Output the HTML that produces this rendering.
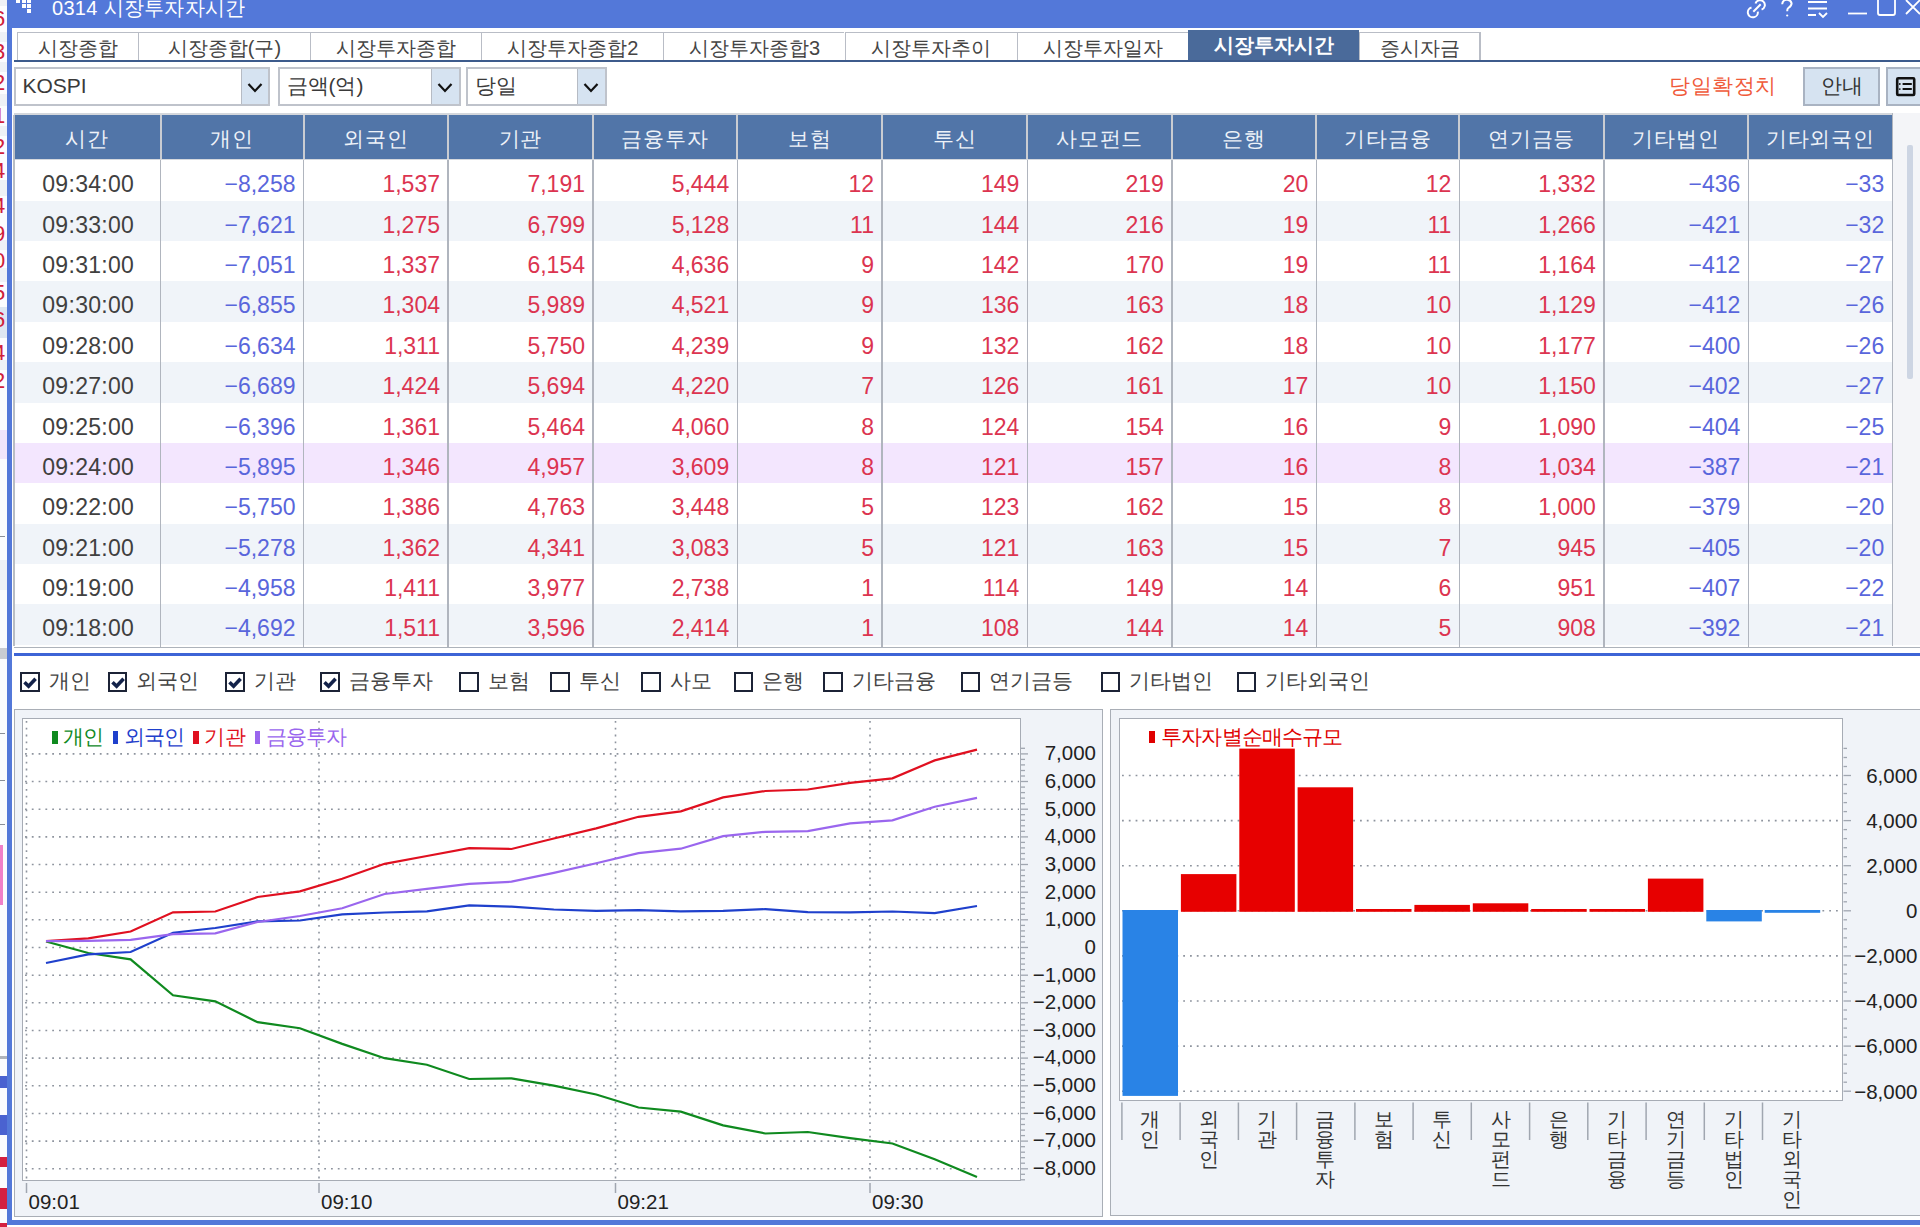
<!DOCTYPE html>
<html><head><meta charset="utf-8"><style>
*{margin:0;padding:0;box-sizing:border-box}
html,body{width:1920px;height:1227px;overflow:hidden;background:#fff}
body{position:relative;font-family:"Liberation Sans",sans-serif;color:#383838}
.a{position:absolute}
.tab{position:absolute;top:32px;height:28px;border-left:1.5px solid #b9bdc6;border-top:1.5px solid #b9bdc6;font-size:20px;line-height:30px;text-align:center;color:#444;white-space:nowrap}
.cb{position:absolute;top:67px;height:39px;border:2px solid #bfc3cb;background:#fff;font-size:21px;line-height:33.5px;color:#3a3a3a;padding-left:6.5px}
.cbb{position:absolute;top:0;right:0;width:27.5px;height:35px;background:#d6e3f1;border-left:1.5px solid #b6bbc4}
.hd{position:absolute;top:115px;height:44px;background:#5175a8;color:#eef2f8;font-size:20.5px;line-height:47px;letter-spacing:0.8px;text-align:center;white-space:nowrap}
.rw{position:absolute;left:14px;width:1878px}
.cell{position:absolute;top:0;font-size:23px;line-height:48px;text-align:right;white-space:nowrap}
.chk{position:absolute;top:672px;width:19.5px;height:19.5px;border:2px solid #1c2336;background:#fff}
.chl{position:absolute;top:667px;font-size:21px;line-height:28px;color:#444;white-space:nowrap}
svg text{font-family:"Liberation Sans",sans-serif}
</style></head><body>

<div class="a" style="left:0;top:0;width:8px;height:1227px;background:#fbfcfe"></div>
<div class="a" style="left:0;top:0px;width:7px;height:6px;background:#eef1f6"></div>
<div class="a" style="left:0;top:32px;width:7px;height:10px;background:#eef1f6"></div>
<div class="a" style="left:0;top:62px;width:7px;height:10px;background:#eef1f6"></div>
<div class="a" style="left:0;top:94px;width:7px;height:12px;background:#eef1f6"></div>
<div class="a" style="left:0;top:126px;width:7px;height:10px;background:#eef1f6"></div>
<div class="a" style="left:0;top:180px;width:7px;height:16px;background:#eef1f6"></div>
<div class="a" style="left:0;top:240px;width:7px;height:10px;background:#eef1f6"></div>
<div class="a" style="left:0;top:268px;width:7px;height:14px;background:#eef1f6"></div>
<div class="a" style="left:0;top:307px;width:7px;height:31px;background:#dde6f2"></div>
<div class="a" style="left:0;top:360px;width:7px;height:10px;background:#eef1f6"></div>
<div class="a" style="left:0;top:430px;width:7px;height:29px;background:#f1e6fb"></div>
<div class="a" style="left:0;top:560px;width:7px;height:30px;background:#eef1f6"></div>
<div class="a" style="left:0;top:648px;width:7px;height:11px;background:#c9ccd2"></div>
<div class="a" style="left:0;top:1056px;width:7px;height:3px;background:#b0b4bb"></div>
<div class="a" style="left:0;top:1076px;width:7px;height:11.5px;background:#4a62d0"></div>
<div class="a" style="left:0;top:1114.7px;width:7px;height:20.6px;background:#4a62d0"></div>
<div class="a" style="left:0;top:1156.6px;width:7px;height:10px;background:#d42040"></div>
<div class="a" style="left:0;top:1188px;width:7px;height:21px;background:#d42040"></div>
<div class="a" style="left:0;top:1223px;width:7px;height:4px;background:#d42040"></div>
<div class="a" style="left:-7px;top:7px;font-size:22px;line-height:24px;color:#d0203a">6</div>
<div class="a" style="left:-7px;top:40px;font-size:22px;line-height:24px;color:#d0203a">3</div>
<div class="a" style="left:-7px;top:71px;font-size:22px;line-height:24px;color:#d0203a">2</div>
<div class="a" style="left:-7px;top:104px;font-size:22px;line-height:24px;color:#d0203a">1</div>
<div class="a" style="left:-7px;top:135px;font-size:22px;line-height:24px;color:#d0203a">2</div>
<div class="a" style="left:-7px;top:159px;font-size:22px;line-height:24px;color:#d0203a">4</div>
<div class="a" style="left:-7px;top:194px;font-size:22px;line-height:24px;color:#d0203a">4</div>
<div class="a" style="left:-7px;top:222px;font-size:22px;line-height:24px;color:#d0203a">9</div>
<div class="a" style="left:-7px;top:249px;font-size:22px;line-height:24px;color:#d0203a">0</div>
<div class="a" style="left:-7px;top:281px;font-size:22px;line-height:24px;color:#d0203a">5</div>
<div class="a" style="left:-7px;top:308px;font-size:22px;line-height:24px;color:#d0203a">6</div>
<div class="a" style="left:-7px;top:341px;font-size:22px;line-height:24px;color:#d0203a">4</div>
<div class="a" style="left:-7px;top:369px;font-size:22px;line-height:24px;color:#d0203a">2</div>
<div class="a" style="left:0;top:845px;width:2.5px;height:60px;background:#f080c8"></div>
<div class="a" style="left:0;top:536px;width:5px;height:1.2px;background:#8a8f98"></div>
<div class="a" style="left:0;top:733px;width:5px;height:1.2px;background:#8a8f98"></div>
<div class="a" style="left:0;top:780px;width:5px;height:1.2px;background:#8a8f98"></div>
<div class="a" style="left:0;top:824px;width:5px;height:1.2px;background:#8a8f98"></div>
<div class="a" style="left:7px;top:0;width:1913px;height:1225px;background:#5378d9"></div>
<div class="a" style="left:11.5px;top:27.5px;width:1908.5px;height:1192.5px;background:#fff"></div>
<div class="a" style="left:52px;top:-5px;font-size:20px;line-height:26px;color:#fff;letter-spacing:0.3px">0314 시장투자자시간</div>
<div class="a" style="left:16.2px;top:-0.8px;width:3.5px;height:3.5px;background:#fff"></div>
<div class="a" style="left:22px;top:-0.8px;width:3.5px;height:3.5px;background:#fff"></div>
<div class="a" style="left:27px;top:-0.8px;width:3.5px;height:3.5px;background:#fff"></div>
<div class="a" style="left:22px;top:4.2px;width:3.5px;height:3.5px;background:#fff"></div>
<div class="a" style="left:27px;top:4.2px;width:3.5px;height:3.5px;background:#fff"></div>
<div class="a" style="left:27px;top:9.3px;width:3.5px;height:3.5px;background:#fff"></div>
<svg class="a" style="left:1740px;top:0" width="180" height="27" viewBox="1740 0 180 27" fill="none" stroke="#fff" stroke-width="1.8">
<path d="M1751.5 7.5 A5 5 0 1 0 1757.8 11.6 M1755.5 3.5 A4.8 4.8 0 1 1 1761.6 9.6 M1753.3 11.7 L1760.7 4.3" stroke-width="2"/>
<path d="M1782.2 4.3 A4.8 4.8 0 0 1 1791.6 3.2 Q1791.6 6 1788.3 8 Q1787.2 8.8 1787.2 11.2" stroke-width="2"/><circle cx="1787.2" cy="15.5" r="1.1" fill="#fff" stroke="none"/>
<path d="M1808 2 h19 M1808 8.5 h19 M1808 15 h8 M1819 13 l4 4 l4 -4"/>
<path d="M1848 13.5 h19"/>
<rect x="1878" y="-2" width="17" height="17" rx="2"/>
<path d="M1906 0 l14 14 M1906 14 l14 -14"/>
</svg>
<div class="tab" style="left:17px;width:121px">시장종합</div>
<div class="tab" style="left:138px;width:172px">시장종합(구)</div>
<div class="tab" style="left:310px;width:171px">시장투자종합</div>
<div class="tab" style="left:481.4px;width:182.0px">시장투자종합2</div>
<div class="tab" style="left:663.4px;width:181.10000000000002px">시장투자종합3</div>
<div class="tab" style="left:844.5px;width:172.39999999999998px">시장투자추이</div>
<div class="tab" style="left:1016.9px;width:171.10000000000002px">시장투자일자</div>
<div class="tab" style="left:1188px;width:171px;top:30px;height:30px;background:#4a6a9a;color:#fff;font-weight:bold;border:none;line-height:31px">시장투자시간</div>
<div class="tab" style="left:1359px;width:120px">증시자금</div>
<div class="a" style="left:1479px;top:32px;width:1.5px;height:28px;background:#b9bdc6"></div>
<div class="a" style="left:14px;top:59.5px;width:1906px;height:2px;background:#3d5b8c"></div>
<div class="cb" style="left:14px;width:256px">KOSPI<div class="cbb"><svg class="a" style="left:5px;top:13px" width="16" height="12"><path d="M1.5 2 L8 9 L14.5 2" fill="none" stroke="#111" stroke-width="2.2"/></svg></div></div>
<div class="cb" style="left:278px;width:182.5px">금액(억)<div class="cbb"><svg class="a" style="left:5px;top:13px" width="16" height="12"><path d="M1.5 2 L8 9 L14.5 2" fill="none" stroke="#111" stroke-width="2.2"/></svg></div></div>
<div class="cb" style="left:466px;width:140.5px">당일<div class="cbb"><svg class="a" style="left:5px;top:13px" width="16" height="12"><path d="M1.5 2 L8 9 L14.5 2" fill="none" stroke="#111" stroke-width="2.2"/></svg></div></div>
<div class="a" style="left:1669px;top:70px;font-size:20.5px;line-height:32px;color:#f05a3a;letter-spacing:0.5px">당일확정치</div>
<div class="a" style="left:1803px;top:67px;width:77px;height:39px;background:#d6e3f1;border:2px solid #a9b3c2;font-size:20.5px;line-height:33px;text-align:center;color:#333">안내</div>
<div class="a" style="left:1886px;top:67px;width:40px;height:39px;background:#d6e3f1;border:2px solid #a9b3c2"></div>
<svg class="a" style="left:1890px;top:70px" width="30" height="32" viewBox="1890 70 30 32"><rect x="1897.2" y="78.2" width="17" height="16.8" rx="1" fill="none" stroke="#111" stroke-width="2.6"/><path d="M1902.6 84 h9.2 M1902.6 89.1 h9.2" stroke="#111" stroke-width="2"/><circle cx="1899.8" cy="84" r="0.9" fill="#111"/><circle cx="1899.8" cy="89.1" r="0.9" fill="#111"/></svg>
<div class="a" style="left:14px;top:113px;width:1878px;height:2px;background:#d4d7dc"></div>
<div class="hd" style="left:14.0px;width:146.5px">시간</div>
<div class="hd" style="left:160.5px;width:143.0px">개인</div>
<div class="hd" style="left:303.5px;width:144.5px">외국인</div>
<div class="hd" style="left:448.0px;width:145.0px">기관</div>
<div class="hd" style="left:593.0px;width:144.2px">금융투자</div>
<div class="hd" style="left:737.2px;width:144.8px">보험</div>
<div class="hd" style="left:882.0px;width:145.3px">투신</div>
<div class="hd" style="left:1027.3px;width:144.5px">사모펀드</div>
<div class="hd" style="left:1171.8px;width:144.5px">은행</div>
<div class="hd" style="left:1316.3px;width:143.1px">기타금융</div>
<div class="hd" style="left:1459.4px;width:144.4px">연기금등</div>
<div class="hd" style="left:1603.8px;width:144.6px">기타법인</div>
<div class="hd" style="left:1748.4px;width:143.8px">기타외국인</div>
<div class="a" style="left:159.5px;top:115px;width:2px;height:44px;background:#c9ccd2"></div>
<div class="a" style="left:302.5px;top:115px;width:2px;height:44px;background:#c9ccd2"></div>
<div class="a" style="left:447.0px;top:115px;width:2px;height:44px;background:#c9ccd2"></div>
<div class="a" style="left:592.0px;top:115px;width:2px;height:44px;background:#c9ccd2"></div>
<div class="a" style="left:736.2px;top:115px;width:2px;height:44px;background:#c9ccd2"></div>
<div class="a" style="left:881.0px;top:115px;width:2px;height:44px;background:#c9ccd2"></div>
<div class="a" style="left:1026.3px;top:115px;width:2px;height:44px;background:#c9ccd2"></div>
<div class="a" style="left:1170.8px;top:115px;width:2px;height:44px;background:#c9ccd2"></div>
<div class="a" style="left:1315.3px;top:115px;width:2px;height:44px;background:#c9ccd2"></div>
<div class="a" style="left:1458.4px;top:115px;width:2px;height:44px;background:#c9ccd2"></div>
<div class="a" style="left:1602.8px;top:115px;width:2px;height:44px;background:#c9ccd2"></div>
<div class="a" style="left:1747.4px;top:115px;width:2px;height:44px;background:#c9ccd2"></div>
<div class="a" style="left:14px;top:159px;width:1878px;height:1.5px;background:#d5d8dd"></div>
<div class="rw" style="top:160.30px;height:40.38px;background:#fff">
<div class="cell" style="left:0.0px;width:146.5px;text-align:center;color:#404040;letter-spacing:0.3px;padding-left:2px">09:34:00</div>
<div class="cell" style="left:146.5px;width:135.0px;color:#5966dc">&#8722;8,258</div>
<div class="cell" style="left:289.5px;width:136.5px;color:#dc3450">1,537</div>
<div class="cell" style="left:434.0px;width:137.0px;color:#dc3450">7,191</div>
<div class="cell" style="left:579.0px;width:136.2px;color:#dc3450">5,444</div>
<div class="cell" style="left:723.2px;width:136.8px;color:#dc3450">12</div>
<div class="cell" style="left:868.0px;width:137.3px;color:#dc3450">149</div>
<div class="cell" style="left:1013.3px;width:136.5px;color:#dc3450">219</div>
<div class="cell" style="left:1157.8px;width:136.5px;color:#dc3450">20</div>
<div class="cell" style="left:1302.3px;width:135.1px;color:#dc3450">12</div>
<div class="cell" style="left:1445.4px;width:136.4px;color:#dc3450">1,332</div>
<div class="cell" style="left:1589.8px;width:136.6px;color:#5966dc">&#8722;436</div>
<div class="cell" style="left:1734.4px;width:135.8px;color:#5966dc">&#8722;33</div>
</div>
<div class="rw" style="top:200.68px;height:40.38px;background:#f0f4f9">
<div class="cell" style="left:0.0px;width:146.5px;text-align:center;color:#404040;letter-spacing:0.3px;padding-left:2px">09:33:00</div>
<div class="cell" style="left:146.5px;width:135.0px;color:#5966dc">&#8722;7,621</div>
<div class="cell" style="left:289.5px;width:136.5px;color:#dc3450">1,275</div>
<div class="cell" style="left:434.0px;width:137.0px;color:#dc3450">6,799</div>
<div class="cell" style="left:579.0px;width:136.2px;color:#dc3450">5,128</div>
<div class="cell" style="left:723.2px;width:136.8px;color:#dc3450">11</div>
<div class="cell" style="left:868.0px;width:137.3px;color:#dc3450">144</div>
<div class="cell" style="left:1013.3px;width:136.5px;color:#dc3450">216</div>
<div class="cell" style="left:1157.8px;width:136.5px;color:#dc3450">19</div>
<div class="cell" style="left:1302.3px;width:135.1px;color:#dc3450">11</div>
<div class="cell" style="left:1445.4px;width:136.4px;color:#dc3450">1,266</div>
<div class="cell" style="left:1589.8px;width:136.6px;color:#5966dc">&#8722;421</div>
<div class="cell" style="left:1734.4px;width:135.8px;color:#5966dc">&#8722;32</div>
</div>
<div class="rw" style="top:241.06px;height:40.38px;background:#fff">
<div class="cell" style="left:0.0px;width:146.5px;text-align:center;color:#404040;letter-spacing:0.3px;padding-left:2px">09:31:00</div>
<div class="cell" style="left:146.5px;width:135.0px;color:#5966dc">&#8722;7,051</div>
<div class="cell" style="left:289.5px;width:136.5px;color:#dc3450">1,337</div>
<div class="cell" style="left:434.0px;width:137.0px;color:#dc3450">6,154</div>
<div class="cell" style="left:579.0px;width:136.2px;color:#dc3450">4,636</div>
<div class="cell" style="left:723.2px;width:136.8px;color:#dc3450">9</div>
<div class="cell" style="left:868.0px;width:137.3px;color:#dc3450">142</div>
<div class="cell" style="left:1013.3px;width:136.5px;color:#dc3450">170</div>
<div class="cell" style="left:1157.8px;width:136.5px;color:#dc3450">19</div>
<div class="cell" style="left:1302.3px;width:135.1px;color:#dc3450">11</div>
<div class="cell" style="left:1445.4px;width:136.4px;color:#dc3450">1,164</div>
<div class="cell" style="left:1589.8px;width:136.6px;color:#5966dc">&#8722;412</div>
<div class="cell" style="left:1734.4px;width:135.8px;color:#5966dc">&#8722;27</div>
</div>
<div class="rw" style="top:281.44px;height:40.38px;background:#f0f4f9">
<div class="cell" style="left:0.0px;width:146.5px;text-align:center;color:#404040;letter-spacing:0.3px;padding-left:2px">09:30:00</div>
<div class="cell" style="left:146.5px;width:135.0px;color:#5966dc">&#8722;6,855</div>
<div class="cell" style="left:289.5px;width:136.5px;color:#dc3450">1,304</div>
<div class="cell" style="left:434.0px;width:137.0px;color:#dc3450">5,989</div>
<div class="cell" style="left:579.0px;width:136.2px;color:#dc3450">4,521</div>
<div class="cell" style="left:723.2px;width:136.8px;color:#dc3450">9</div>
<div class="cell" style="left:868.0px;width:137.3px;color:#dc3450">136</div>
<div class="cell" style="left:1013.3px;width:136.5px;color:#dc3450">163</div>
<div class="cell" style="left:1157.8px;width:136.5px;color:#dc3450">18</div>
<div class="cell" style="left:1302.3px;width:135.1px;color:#dc3450">10</div>
<div class="cell" style="left:1445.4px;width:136.4px;color:#dc3450">1,129</div>
<div class="cell" style="left:1589.8px;width:136.6px;color:#5966dc">&#8722;412</div>
<div class="cell" style="left:1734.4px;width:135.8px;color:#5966dc">&#8722;26</div>
</div>
<div class="rw" style="top:321.82px;height:40.38px;background:#fff">
<div class="cell" style="left:0.0px;width:146.5px;text-align:center;color:#404040;letter-spacing:0.3px;padding-left:2px">09:28:00</div>
<div class="cell" style="left:146.5px;width:135.0px;color:#5966dc">&#8722;6,634</div>
<div class="cell" style="left:289.5px;width:136.5px;color:#dc3450">1,311</div>
<div class="cell" style="left:434.0px;width:137.0px;color:#dc3450">5,750</div>
<div class="cell" style="left:579.0px;width:136.2px;color:#dc3450">4,239</div>
<div class="cell" style="left:723.2px;width:136.8px;color:#dc3450">9</div>
<div class="cell" style="left:868.0px;width:137.3px;color:#dc3450">132</div>
<div class="cell" style="left:1013.3px;width:136.5px;color:#dc3450">162</div>
<div class="cell" style="left:1157.8px;width:136.5px;color:#dc3450">18</div>
<div class="cell" style="left:1302.3px;width:135.1px;color:#dc3450">10</div>
<div class="cell" style="left:1445.4px;width:136.4px;color:#dc3450">1,177</div>
<div class="cell" style="left:1589.8px;width:136.6px;color:#5966dc">&#8722;400</div>
<div class="cell" style="left:1734.4px;width:135.8px;color:#5966dc">&#8722;26</div>
</div>
<div class="rw" style="top:362.20px;height:40.38px;background:#f0f4f9">
<div class="cell" style="left:0.0px;width:146.5px;text-align:center;color:#404040;letter-spacing:0.3px;padding-left:2px">09:27:00</div>
<div class="cell" style="left:146.5px;width:135.0px;color:#5966dc">&#8722;6,689</div>
<div class="cell" style="left:289.5px;width:136.5px;color:#dc3450">1,424</div>
<div class="cell" style="left:434.0px;width:137.0px;color:#dc3450">5,694</div>
<div class="cell" style="left:579.0px;width:136.2px;color:#dc3450">4,220</div>
<div class="cell" style="left:723.2px;width:136.8px;color:#dc3450">7</div>
<div class="cell" style="left:868.0px;width:137.3px;color:#dc3450">126</div>
<div class="cell" style="left:1013.3px;width:136.5px;color:#dc3450">161</div>
<div class="cell" style="left:1157.8px;width:136.5px;color:#dc3450">17</div>
<div class="cell" style="left:1302.3px;width:135.1px;color:#dc3450">10</div>
<div class="cell" style="left:1445.4px;width:136.4px;color:#dc3450">1,150</div>
<div class="cell" style="left:1589.8px;width:136.6px;color:#5966dc">&#8722;402</div>
<div class="cell" style="left:1734.4px;width:135.8px;color:#5966dc">&#8722;27</div>
</div>
<div class="rw" style="top:402.58px;height:40.38px;background:#fff">
<div class="cell" style="left:0.0px;width:146.5px;text-align:center;color:#404040;letter-spacing:0.3px;padding-left:2px">09:25:00</div>
<div class="cell" style="left:146.5px;width:135.0px;color:#5966dc">&#8722;6,396</div>
<div class="cell" style="left:289.5px;width:136.5px;color:#dc3450">1,361</div>
<div class="cell" style="left:434.0px;width:137.0px;color:#dc3450">5,464</div>
<div class="cell" style="left:579.0px;width:136.2px;color:#dc3450">4,060</div>
<div class="cell" style="left:723.2px;width:136.8px;color:#dc3450">8</div>
<div class="cell" style="left:868.0px;width:137.3px;color:#dc3450">124</div>
<div class="cell" style="left:1013.3px;width:136.5px;color:#dc3450">154</div>
<div class="cell" style="left:1157.8px;width:136.5px;color:#dc3450">16</div>
<div class="cell" style="left:1302.3px;width:135.1px;color:#dc3450">9</div>
<div class="cell" style="left:1445.4px;width:136.4px;color:#dc3450">1,090</div>
<div class="cell" style="left:1589.8px;width:136.6px;color:#5966dc">&#8722;404</div>
<div class="cell" style="left:1734.4px;width:135.8px;color:#5966dc">&#8722;25</div>
</div>
<div class="rw" style="top:442.96px;height:40.38px;background:#f3e6fe">
<div class="cell" style="left:0.0px;width:146.5px;text-align:center;color:#404040;letter-spacing:0.3px;padding-left:2px">09:24:00</div>
<div class="cell" style="left:146.5px;width:135.0px;color:#5966dc">&#8722;5,895</div>
<div class="cell" style="left:289.5px;width:136.5px;color:#dc3450">1,346</div>
<div class="cell" style="left:434.0px;width:137.0px;color:#dc3450">4,957</div>
<div class="cell" style="left:579.0px;width:136.2px;color:#dc3450">3,609</div>
<div class="cell" style="left:723.2px;width:136.8px;color:#dc3450">8</div>
<div class="cell" style="left:868.0px;width:137.3px;color:#dc3450">121</div>
<div class="cell" style="left:1013.3px;width:136.5px;color:#dc3450">157</div>
<div class="cell" style="left:1157.8px;width:136.5px;color:#dc3450">16</div>
<div class="cell" style="left:1302.3px;width:135.1px;color:#dc3450">8</div>
<div class="cell" style="left:1445.4px;width:136.4px;color:#dc3450">1,034</div>
<div class="cell" style="left:1589.8px;width:136.6px;color:#5966dc">&#8722;387</div>
<div class="cell" style="left:1734.4px;width:135.8px;color:#5966dc">&#8722;21</div>
</div>
<div class="rw" style="top:483.34px;height:40.38px;background:#fff">
<div class="cell" style="left:0.0px;width:146.5px;text-align:center;color:#404040;letter-spacing:0.3px;padding-left:2px">09:22:00</div>
<div class="cell" style="left:146.5px;width:135.0px;color:#5966dc">&#8722;5,750</div>
<div class="cell" style="left:289.5px;width:136.5px;color:#dc3450">1,386</div>
<div class="cell" style="left:434.0px;width:137.0px;color:#dc3450">4,763</div>
<div class="cell" style="left:579.0px;width:136.2px;color:#dc3450">3,448</div>
<div class="cell" style="left:723.2px;width:136.8px;color:#dc3450">5</div>
<div class="cell" style="left:868.0px;width:137.3px;color:#dc3450">123</div>
<div class="cell" style="left:1013.3px;width:136.5px;color:#dc3450">162</div>
<div class="cell" style="left:1157.8px;width:136.5px;color:#dc3450">15</div>
<div class="cell" style="left:1302.3px;width:135.1px;color:#dc3450">8</div>
<div class="cell" style="left:1445.4px;width:136.4px;color:#dc3450">1,000</div>
<div class="cell" style="left:1589.8px;width:136.6px;color:#5966dc">&#8722;379</div>
<div class="cell" style="left:1734.4px;width:135.8px;color:#5966dc">&#8722;20</div>
</div>
<div class="rw" style="top:523.72px;height:40.38px;background:#f0f4f9">
<div class="cell" style="left:0.0px;width:146.5px;text-align:center;color:#404040;letter-spacing:0.3px;padding-left:2px">09:21:00</div>
<div class="cell" style="left:146.5px;width:135.0px;color:#5966dc">&#8722;5,278</div>
<div class="cell" style="left:289.5px;width:136.5px;color:#dc3450">1,362</div>
<div class="cell" style="left:434.0px;width:137.0px;color:#dc3450">4,341</div>
<div class="cell" style="left:579.0px;width:136.2px;color:#dc3450">3,083</div>
<div class="cell" style="left:723.2px;width:136.8px;color:#dc3450">5</div>
<div class="cell" style="left:868.0px;width:137.3px;color:#dc3450">121</div>
<div class="cell" style="left:1013.3px;width:136.5px;color:#dc3450">163</div>
<div class="cell" style="left:1157.8px;width:136.5px;color:#dc3450">15</div>
<div class="cell" style="left:1302.3px;width:135.1px;color:#dc3450">7</div>
<div class="cell" style="left:1445.4px;width:136.4px;color:#dc3450">945</div>
<div class="cell" style="left:1589.8px;width:136.6px;color:#5966dc">&#8722;405</div>
<div class="cell" style="left:1734.4px;width:135.8px;color:#5966dc">&#8722;20</div>
</div>
<div class="rw" style="top:564.10px;height:40.38px;background:#fff">
<div class="cell" style="left:0.0px;width:146.5px;text-align:center;color:#404040;letter-spacing:0.3px;padding-left:2px">09:19:00</div>
<div class="cell" style="left:146.5px;width:135.0px;color:#5966dc">&#8722;4,958</div>
<div class="cell" style="left:289.5px;width:136.5px;color:#dc3450">1,411</div>
<div class="cell" style="left:434.0px;width:137.0px;color:#dc3450">3,977</div>
<div class="cell" style="left:579.0px;width:136.2px;color:#dc3450">2,738</div>
<div class="cell" style="left:723.2px;width:136.8px;color:#dc3450">1</div>
<div class="cell" style="left:868.0px;width:137.3px;color:#dc3450">114</div>
<div class="cell" style="left:1013.3px;width:136.5px;color:#dc3450">149</div>
<div class="cell" style="left:1157.8px;width:136.5px;color:#dc3450">14</div>
<div class="cell" style="left:1302.3px;width:135.1px;color:#dc3450">6</div>
<div class="cell" style="left:1445.4px;width:136.4px;color:#dc3450">951</div>
<div class="cell" style="left:1589.8px;width:136.6px;color:#5966dc">&#8722;407</div>
<div class="cell" style="left:1734.4px;width:135.8px;color:#5966dc">&#8722;22</div>
</div>
<div class="rw" style="top:604.48px;height:40.38px;background:#f0f4f9">
<div class="cell" style="left:0.0px;width:146.5px;text-align:center;color:#404040;letter-spacing:0.3px;padding-left:2px">09:18:00</div>
<div class="cell" style="left:146.5px;width:135.0px;color:#5966dc">&#8722;4,692</div>
<div class="cell" style="left:289.5px;width:136.5px;color:#dc3450">1,511</div>
<div class="cell" style="left:434.0px;width:137.0px;color:#dc3450">3,596</div>
<div class="cell" style="left:579.0px;width:136.2px;color:#dc3450">2,414</div>
<div class="cell" style="left:723.2px;width:136.8px;color:#dc3450">1</div>
<div class="cell" style="left:868.0px;width:137.3px;color:#dc3450">108</div>
<div class="cell" style="left:1013.3px;width:136.5px;color:#dc3450">144</div>
<div class="cell" style="left:1157.8px;width:136.5px;color:#dc3450">14</div>
<div class="cell" style="left:1302.3px;width:135.1px;color:#dc3450">5</div>
<div class="cell" style="left:1445.4px;width:136.4px;color:#dc3450">908</div>
<div class="cell" style="left:1589.8px;width:136.6px;color:#5966dc">&#8722;392</div>
<div class="cell" style="left:1734.4px;width:135.8px;color:#5966dc">&#8722;21</div>
</div>
<div class="a" style="left:159.8px;top:160px;width:1.5px;height:488px;background:#b0b5be"></div>
<div class="a" style="left:302.8px;top:160px;width:1.5px;height:488px;background:#b0b5be"></div>
<div class="a" style="left:447.2px;top:160px;width:1.5px;height:488px;background:#b0b5be"></div>
<div class="a" style="left:592.2px;top:160px;width:1.5px;height:488px;background:#b0b5be"></div>
<div class="a" style="left:736.5px;top:160px;width:1.5px;height:488px;background:#b0b5be"></div>
<div class="a" style="left:881.2px;top:160px;width:1.5px;height:488px;background:#b0b5be"></div>
<div class="a" style="left:1026.5px;top:160px;width:1.5px;height:488px;background:#b0b5be"></div>
<div class="a" style="left:1171.0px;top:160px;width:1.5px;height:488px;background:#b0b5be"></div>
<div class="a" style="left:1315.5px;top:160px;width:1.5px;height:488px;background:#b0b5be"></div>
<div class="a" style="left:1458.7px;top:160px;width:1.5px;height:488px;background:#b0b5be"></div>
<div class="a" style="left:1603.0px;top:160px;width:1.5px;height:488px;background:#b0b5be"></div>
<div class="a" style="left:1747.7px;top:160px;width:1.5px;height:488px;background:#b0b5be"></div>
<div class="a" style="left:13px;top:115px;width:2px;height:531px;background:#b8bdc4"></div>
<div class="a" style="left:1891.5px;top:113px;width:1.5px;height:533px;background:#b0b5be"></div>
<div class="a" style="left:14px;top:646.8px;width:1906px;height:1.6px;background:#adb3bb"></div>
<div class="a" style="left:1893px;top:113px;width:27px;height:532px;background:#f4f5f8"></div>
<div class="a" style="left:1907px;top:145px;width:6px;height:234px;background:#cdd5e3;border-radius:2px"></div>
<div class="a" style="left:14px;top:653.3px;width:1906px;height:3.2px;background:#3d64d6"></div>
<div class="chk" style="left:20.25px"></div>
<svg class="a" style="left:23.25px;top:675px" width="14" height="14"><path d="M1.5 7.2 L5.6 11.2 L12.6 3.8" fill="none" stroke="#13224a" stroke-width="3.6"/></svg>
<div class="chl" style="left:48.75px">개인</div>
<div class="chk" style="left:107.75px"></div>
<svg class="a" style="left:110.75px;top:675px" width="14" height="14"><path d="M1.5 7.2 L5.6 11.2 L12.6 3.8" fill="none" stroke="#13224a" stroke-width="3.6"/></svg>
<div class="chl" style="left:136.25px">외국인</div>
<div class="chk" style="left:225px"></div>
<svg class="a" style="left:228px;top:675px" width="14" height="14"><path d="M1.5 7.2 L5.6 11.2 L12.6 3.8" fill="none" stroke="#13224a" stroke-width="3.6"/></svg>
<div class="chl" style="left:253.5px">기관</div>
<div class="chk" style="left:320px"></div>
<svg class="a" style="left:323px;top:675px" width="14" height="14"><path d="M1.5 7.2 L5.6 11.2 L12.6 3.8" fill="none" stroke="#13224a" stroke-width="3.6"/></svg>
<div class="chl" style="left:348.5px">금융투자</div>
<div class="chk" style="left:459.25px"></div>
<div class="chl" style="left:487.75px">보험</div>
<div class="chk" style="left:550px"></div>
<div class="chl" style="left:578.5px">투신</div>
<div class="chk" style="left:641px"></div>
<div class="chl" style="left:669.5px">사모</div>
<div class="chk" style="left:733.5px"></div>
<div class="chl" style="left:762.0px">은행</div>
<div class="chk" style="left:823px"></div>
<div class="chl" style="left:851.5px">기타금융</div>
<div class="chk" style="left:960.5px"></div>
<div class="chl" style="left:989.0px">연기금등</div>
<div class="chk" style="left:1100.75px"></div>
<div class="chl" style="left:1129.25px">기타법인</div>
<div class="chk" style="left:1236.75px"></div>
<div class="chl" style="left:1265.25px">기타외국인</div>
<div class="a" style="left:13.5px;top:709px;width:1089.5px;height:507.5px;background:#f0f3f8;border:1.5px solid #a9aeb6"></div>
<div class="a" style="left:22px;top:718px;width:999px;height:463px;background:#fff;border:1.5px solid #a7acb5"></div>
<svg class="a" style="left:0;top:700px" width="1110" height="527" viewBox="0 700 1110 527">
<line x1="25" y1="1168.8" x2="1019" y2="1168.8" stroke="#8e949e" stroke-width="1.6" stroke-dasharray="1.8 5"/>
<line x1="25" y1="1141.1" x2="1019" y2="1141.1" stroke="#8e949e" stroke-width="1.6" stroke-dasharray="1.8 5"/>
<line x1="25" y1="1113.5" x2="1019" y2="1113.5" stroke="#8e949e" stroke-width="1.6" stroke-dasharray="1.8 5"/>
<line x1="25" y1="1085.8" x2="1019" y2="1085.8" stroke="#8e949e" stroke-width="1.6" stroke-dasharray="1.8 5"/>
<line x1="25" y1="1058.1" x2="1019" y2="1058.1" stroke="#8e949e" stroke-width="1.6" stroke-dasharray="1.8 5"/>
<line x1="25" y1="1030.5" x2="1019" y2="1030.5" stroke="#8e949e" stroke-width="1.6" stroke-dasharray="1.8 5"/>
<line x1="25" y1="1002.8" x2="1019" y2="1002.8" stroke="#8e949e" stroke-width="1.6" stroke-dasharray="1.8 5"/>
<line x1="25" y1="975.2" x2="1019" y2="975.2" stroke="#8e949e" stroke-width="1.6" stroke-dasharray="1.8 5"/>
<line x1="25" y1="947.5" x2="1019" y2="947.5" stroke="#8e949e" stroke-width="1.6" stroke-dasharray="1.8 5"/>
<line x1="25" y1="919.8" x2="1019" y2="919.8" stroke="#8e949e" stroke-width="1.6" stroke-dasharray="1.8 5"/>
<line x1="25" y1="892.2" x2="1019" y2="892.2" stroke="#8e949e" stroke-width="1.6" stroke-dasharray="1.8 5"/>
<line x1="25" y1="864.5" x2="1019" y2="864.5" stroke="#8e949e" stroke-width="1.6" stroke-dasharray="1.8 5"/>
<line x1="25" y1="836.9" x2="1019" y2="836.9" stroke="#8e949e" stroke-width="1.6" stroke-dasharray="1.8 5"/>
<line x1="25" y1="809.2" x2="1019" y2="809.2" stroke="#8e949e" stroke-width="1.6" stroke-dasharray="1.8 5"/>
<line x1="25" y1="781.5" x2="1019" y2="781.5" stroke="#8e949e" stroke-width="1.6" stroke-dasharray="1.8 5"/>
<line x1="25" y1="753.9" x2="1019" y2="753.9" stroke="#8e949e" stroke-width="1.6" stroke-dasharray="1.8 5"/>
<line x1="26.5" y1="721" x2="26.5" y2="1179" stroke="#8e949e" stroke-width="1.6" stroke-dasharray="1.8 5"/>
<line x1="319" y1="721" x2="319" y2="1179" stroke="#8e949e" stroke-width="1.6" stroke-dasharray="1.8 5"/>
<line x1="615.5" y1="721" x2="615.5" y2="1179" stroke="#8e949e" stroke-width="1.6" stroke-dasharray="1.8 5"/>
<line x1="870" y1="721" x2="870" y2="1179" stroke="#8e949e" stroke-width="1.6" stroke-dasharray="1.8 5"/>
<line x1="1021" y1="748.3" x2="1025" y2="748.3" stroke="#a0a6b0" stroke-width="1.3"/>
<line x1="1021" y1="753.9" x2="1028" y2="753.9" stroke="#a0a6b0" stroke-width="1.3"/>
<line x1="1021" y1="759.4" x2="1025" y2="759.4" stroke="#a0a6b0" stroke-width="1.3"/>
<line x1="1021" y1="764.9" x2="1025" y2="764.9" stroke="#a0a6b0" stroke-width="1.3"/>
<line x1="1021" y1="770.5" x2="1025" y2="770.5" stroke="#a0a6b0" stroke-width="1.3"/>
<line x1="1021" y1="776.0" x2="1025" y2="776.0" stroke="#a0a6b0" stroke-width="1.3"/>
<line x1="1021" y1="781.5" x2="1028" y2="781.5" stroke="#a0a6b0" stroke-width="1.3"/>
<line x1="1021" y1="787.1" x2="1025" y2="787.1" stroke="#a0a6b0" stroke-width="1.3"/>
<line x1="1021" y1="792.6" x2="1025" y2="792.6" stroke="#a0a6b0" stroke-width="1.3"/>
<line x1="1021" y1="798.1" x2="1025" y2="798.1" stroke="#a0a6b0" stroke-width="1.3"/>
<line x1="1021" y1="803.7" x2="1025" y2="803.7" stroke="#a0a6b0" stroke-width="1.3"/>
<line x1="1021" y1="809.2" x2="1028" y2="809.2" stroke="#a0a6b0" stroke-width="1.3"/>
<line x1="1021" y1="814.7" x2="1025" y2="814.7" stroke="#a0a6b0" stroke-width="1.3"/>
<line x1="1021" y1="820.3" x2="1025" y2="820.3" stroke="#a0a6b0" stroke-width="1.3"/>
<line x1="1021" y1="825.8" x2="1025" y2="825.8" stroke="#a0a6b0" stroke-width="1.3"/>
<line x1="1021" y1="831.3" x2="1025" y2="831.3" stroke="#a0a6b0" stroke-width="1.3"/>
<line x1="1021" y1="836.9" x2="1028" y2="836.9" stroke="#a0a6b0" stroke-width="1.3"/>
<line x1="1021" y1="842.4" x2="1025" y2="842.4" stroke="#a0a6b0" stroke-width="1.3"/>
<line x1="1021" y1="847.9" x2="1025" y2="847.9" stroke="#a0a6b0" stroke-width="1.3"/>
<line x1="1021" y1="853.5" x2="1025" y2="853.5" stroke="#a0a6b0" stroke-width="1.3"/>
<line x1="1021" y1="859.0" x2="1025" y2="859.0" stroke="#a0a6b0" stroke-width="1.3"/>
<line x1="1021" y1="864.5" x2="1028" y2="864.5" stroke="#a0a6b0" stroke-width="1.3"/>
<line x1="1021" y1="870.1" x2="1025" y2="870.1" stroke="#a0a6b0" stroke-width="1.3"/>
<line x1="1021" y1="875.6" x2="1025" y2="875.6" stroke="#a0a6b0" stroke-width="1.3"/>
<line x1="1021" y1="881.1" x2="1025" y2="881.1" stroke="#a0a6b0" stroke-width="1.3"/>
<line x1="1021" y1="886.6" x2="1025" y2="886.6" stroke="#a0a6b0" stroke-width="1.3"/>
<line x1="1021" y1="892.2" x2="1028" y2="892.2" stroke="#a0a6b0" stroke-width="1.3"/>
<line x1="1021" y1="897.7" x2="1025" y2="897.7" stroke="#a0a6b0" stroke-width="1.3"/>
<line x1="1021" y1="903.2" x2="1025" y2="903.2" stroke="#a0a6b0" stroke-width="1.3"/>
<line x1="1021" y1="908.8" x2="1025" y2="908.8" stroke="#a0a6b0" stroke-width="1.3"/>
<line x1="1021" y1="914.3" x2="1025" y2="914.3" stroke="#a0a6b0" stroke-width="1.3"/>
<line x1="1021" y1="919.8" x2="1028" y2="919.8" stroke="#a0a6b0" stroke-width="1.3"/>
<line x1="1021" y1="925.4" x2="1025" y2="925.4" stroke="#a0a6b0" stroke-width="1.3"/>
<line x1="1021" y1="930.9" x2="1025" y2="930.9" stroke="#a0a6b0" stroke-width="1.3"/>
<line x1="1021" y1="936.4" x2="1025" y2="936.4" stroke="#a0a6b0" stroke-width="1.3"/>
<line x1="1021" y1="942.0" x2="1025" y2="942.0" stroke="#a0a6b0" stroke-width="1.3"/>
<line x1="1021" y1="947.5" x2="1028" y2="947.5" stroke="#a0a6b0" stroke-width="1.3"/>
<line x1="1021" y1="953.0" x2="1025" y2="953.0" stroke="#a0a6b0" stroke-width="1.3"/>
<line x1="1021" y1="958.6" x2="1025" y2="958.6" stroke="#a0a6b0" stroke-width="1.3"/>
<line x1="1021" y1="964.1" x2="1025" y2="964.1" stroke="#a0a6b0" stroke-width="1.3"/>
<line x1="1021" y1="969.6" x2="1025" y2="969.6" stroke="#a0a6b0" stroke-width="1.3"/>
<line x1="1021" y1="975.2" x2="1028" y2="975.2" stroke="#a0a6b0" stroke-width="1.3"/>
<line x1="1021" y1="980.7" x2="1025" y2="980.7" stroke="#a0a6b0" stroke-width="1.3"/>
<line x1="1021" y1="986.2" x2="1025" y2="986.2" stroke="#a0a6b0" stroke-width="1.3"/>
<line x1="1021" y1="991.8" x2="1025" y2="991.8" stroke="#a0a6b0" stroke-width="1.3"/>
<line x1="1021" y1="997.3" x2="1025" y2="997.3" stroke="#a0a6b0" stroke-width="1.3"/>
<line x1="1021" y1="1002.8" x2="1028" y2="1002.8" stroke="#a0a6b0" stroke-width="1.3"/>
<line x1="1021" y1="1008.4" x2="1025" y2="1008.4" stroke="#a0a6b0" stroke-width="1.3"/>
<line x1="1021" y1="1013.9" x2="1025" y2="1013.9" stroke="#a0a6b0" stroke-width="1.3"/>
<line x1="1021" y1="1019.4" x2="1025" y2="1019.4" stroke="#a0a6b0" stroke-width="1.3"/>
<line x1="1021" y1="1024.9" x2="1025" y2="1024.9" stroke="#a0a6b0" stroke-width="1.3"/>
<line x1="1021" y1="1030.5" x2="1028" y2="1030.5" stroke="#a0a6b0" stroke-width="1.3"/>
<line x1="1021" y1="1036.0" x2="1025" y2="1036.0" stroke="#a0a6b0" stroke-width="1.3"/>
<line x1="1021" y1="1041.5" x2="1025" y2="1041.5" stroke="#a0a6b0" stroke-width="1.3"/>
<line x1="1021" y1="1047.1" x2="1025" y2="1047.1" stroke="#a0a6b0" stroke-width="1.3"/>
<line x1="1021" y1="1052.6" x2="1025" y2="1052.6" stroke="#a0a6b0" stroke-width="1.3"/>
<line x1="1021" y1="1058.1" x2="1028" y2="1058.1" stroke="#a0a6b0" stroke-width="1.3"/>
<line x1="1021" y1="1063.7" x2="1025" y2="1063.7" stroke="#a0a6b0" stroke-width="1.3"/>
<line x1="1021" y1="1069.2" x2="1025" y2="1069.2" stroke="#a0a6b0" stroke-width="1.3"/>
<line x1="1021" y1="1074.7" x2="1025" y2="1074.7" stroke="#a0a6b0" stroke-width="1.3"/>
<line x1="1021" y1="1080.3" x2="1025" y2="1080.3" stroke="#a0a6b0" stroke-width="1.3"/>
<line x1="1021" y1="1085.8" x2="1028" y2="1085.8" stroke="#a0a6b0" stroke-width="1.3"/>
<line x1="1021" y1="1091.3" x2="1025" y2="1091.3" stroke="#a0a6b0" stroke-width="1.3"/>
<line x1="1021" y1="1096.9" x2="1025" y2="1096.9" stroke="#a0a6b0" stroke-width="1.3"/>
<line x1="1021" y1="1102.4" x2="1025" y2="1102.4" stroke="#a0a6b0" stroke-width="1.3"/>
<line x1="1021" y1="1107.9" x2="1025" y2="1107.9" stroke="#a0a6b0" stroke-width="1.3"/>
<line x1="1021" y1="1113.5" x2="1028" y2="1113.5" stroke="#a0a6b0" stroke-width="1.3"/>
<line x1="1021" y1="1119.0" x2="1025" y2="1119.0" stroke="#a0a6b0" stroke-width="1.3"/>
<line x1="1021" y1="1124.5" x2="1025" y2="1124.5" stroke="#a0a6b0" stroke-width="1.3"/>
<line x1="1021" y1="1130.1" x2="1025" y2="1130.1" stroke="#a0a6b0" stroke-width="1.3"/>
<line x1="1021" y1="1135.6" x2="1025" y2="1135.6" stroke="#a0a6b0" stroke-width="1.3"/>
<line x1="1021" y1="1141.1" x2="1028" y2="1141.1" stroke="#a0a6b0" stroke-width="1.3"/>
<line x1="1021" y1="1146.7" x2="1025" y2="1146.7" stroke="#a0a6b0" stroke-width="1.3"/>
<line x1="1021" y1="1152.2" x2="1025" y2="1152.2" stroke="#a0a6b0" stroke-width="1.3"/>
<line x1="1021" y1="1157.7" x2="1025" y2="1157.7" stroke="#a0a6b0" stroke-width="1.3"/>
<line x1="1021" y1="1163.2" x2="1025" y2="1163.2" stroke="#a0a6b0" stroke-width="1.3"/>
<line x1="1021" y1="1168.8" x2="1028" y2="1168.8" stroke="#a0a6b0" stroke-width="1.3"/>
<line x1="1021" y1="1174.3" x2="1025" y2="1174.3" stroke="#a0a6b0" stroke-width="1.3"/>
<line x1="1021" y1="1179.8" x2="1025" y2="1179.8" stroke="#a0a6b0" stroke-width="1.3"/>
<text x="1096" y="1175.1" font-size="20.5" fill="#222" text-anchor="end">&#8722;8,000</text>
<text x="1096" y="1147.4" font-size="20.5" fill="#222" text-anchor="end">&#8722;7,000</text>
<text x="1096" y="1119.8" font-size="20.5" fill="#222" text-anchor="end">&#8722;6,000</text>
<text x="1096" y="1092.1" font-size="20.5" fill="#222" text-anchor="end">&#8722;5,000</text>
<text x="1096" y="1064.4" font-size="20.5" fill="#222" text-anchor="end">&#8722;4,000</text>
<text x="1096" y="1036.8" font-size="20.5" fill="#222" text-anchor="end">&#8722;3,000</text>
<text x="1096" y="1009.1" font-size="20.5" fill="#222" text-anchor="end">&#8722;2,000</text>
<text x="1096" y="981.5" font-size="20.5" fill="#222" text-anchor="end">&#8722;1,000</text>
<text x="1096" y="953.8" font-size="20.5" fill="#222" text-anchor="end">0</text>
<text x="1096" y="926.1" font-size="20.5" fill="#222" text-anchor="end">1,000</text>
<text x="1096" y="898.5" font-size="20.5" fill="#222" text-anchor="end">2,000</text>
<text x="1096" y="870.8" font-size="20.5" fill="#222" text-anchor="end">3,000</text>
<text x="1096" y="843.2" font-size="20.5" fill="#222" text-anchor="end">4,000</text>
<text x="1096" y="815.5" font-size="20.5" fill="#222" text-anchor="end">5,000</text>
<text x="1096" y="787.8" font-size="20.5" fill="#222" text-anchor="end">6,000</text>
<text x="1096" y="760.2" font-size="20.5" fill="#222" text-anchor="end">7,000</text>
<line x1="26.5" y1="1183" x2="26.5" y2="1193" stroke="#a0a6b0" stroke-width="1.5"/>
<text x="28.5" y="1208.5" font-size="20.5" fill="#222">09:01</text>
<line x1="319" y1="1183" x2="319" y2="1193" stroke="#a0a6b0" stroke-width="1.5"/>
<text x="321" y="1208.5" font-size="20.5" fill="#222">09:10</text>
<line x1="615.5" y1="1183" x2="615.5" y2="1193" stroke="#a0a6b0" stroke-width="1.5"/>
<text x="617.5" y="1208.5" font-size="20.5" fill="#222">09:21</text>
<line x1="870" y1="1183" x2="870" y2="1193" stroke="#a0a6b0" stroke-width="1.5"/>
<text x="872" y="1208.5" font-size="20.5" fill="#222">09:30</text>
<polyline points="46.0,941.5 88.3,953.0 130.6,959.3 173.0,995.3 215.3,1001.3 257.6,1022.2 299.9,1028.2 342.2,1043.9 384.6,1058.2 426.9,1064.7 469.2,1079.0 511.5,1078.3 553.8,1085.6 596.2,1094.5 638.5,1107.5 680.8,1111.6 723.1,1125.4 765.4,1133.5 807.8,1132.0 850.1,1138.1 892.4,1143.5 934.7,1159.3 977.0,1176.9" fill="none" stroke="#0f8a1f" stroke-width="2.2" stroke-linejoin="miter"/>
<polyline points="46.0,963.0 88.3,954.3 130.6,952.0 173.0,932.7 215.3,928.0 257.6,921.3 299.9,920.5 342.2,914.3 384.6,912.5 426.9,911.3 469.2,905.4 511.5,906.7 553.8,909.5 596.2,910.8 638.5,910.2 680.8,911.3 723.1,910.9 765.4,909.1 807.8,912.2 850.1,912.4 892.4,911.5 934.7,913.2 977.0,906.0" fill="none" stroke="#1f40cc" stroke-width="2.2" stroke-linejoin="miter"/>
<polyline points="46.0,941.2 88.3,938.3 130.6,931.5 173.0,912.3 215.3,911.5 257.6,897.0 299.9,891.3 342.2,878.8 384.6,863.8 426.9,856.0 469.2,848.1 511.5,849.0 553.8,838.5 596.2,828.4 638.5,816.8 680.8,811.4 723.1,797.4 765.4,791.0 807.8,789.5 850.1,782.8 892.4,778.3 934.7,760.4 977.0,749.6" fill="none" stroke="#e01020" stroke-width="2.2" stroke-linejoin="miter"/>
<polyline points="46.0,941.2 88.3,940.9 130.6,939.8 173.0,934.1 215.3,933.3 257.6,922.0 299.9,916.0 342.2,908.3 384.6,894.0 426.9,888.8 469.2,883.8 511.5,881.7 553.8,872.8 596.2,863.2 638.5,853.1 680.8,848.7 723.1,836.2 765.4,831.8 807.8,831.2 850.1,823.4 892.4,820.3 934.7,806.7 977.0,797.9" fill="none" stroke="#9a66ee" stroke-width="2.2" stroke-linejoin="miter"/>
</svg>
<div class="a" style="left:52px;top:731px;width:5.5px;height:12.5px;background:#0f8a1f"></div>
<div class="a" style="left:62.6px;top:724px;font-size:20.5px;line-height:26px;color:#0f8a1f;white-space:nowrap;letter-spacing:-0.7px">개인</div>
<div class="a" style="left:112.7px;top:731px;width:5.5px;height:12.5px;background:#1f40cc"></div>
<div class="a" style="left:123.7px;top:724px;font-size:20.5px;line-height:26px;color:#1f40cc;white-space:nowrap;letter-spacing:-0.7px">외국인</div>
<div class="a" style="left:193.4px;top:731px;width:5.5px;height:12.5px;background:#e01020"></div>
<div class="a" style="left:204.4px;top:724px;font-size:20.5px;line-height:26px;color:#e01020;white-space:nowrap;letter-spacing:-0.7px">기관</div>
<div class="a" style="left:254.5px;top:731px;width:5.5px;height:12.5px;background:#9a66ee"></div>
<div class="a" style="left:265.5px;top:724px;font-size:20.5px;line-height:26px;color:#9a66ee;white-space:nowrap;letter-spacing:-0.7px">금융투자</div>
<div class="a" style="left:1110px;top:709px;width:830px;height:507px;background:#f0f3f8;border:1.5px solid #a9aeb6"></div>
<div class="a" style="left:1118.5px;top:718px;width:724.5px;height:382.5px;background:#fff;border:1.5px solid #a7acb5"></div>
<svg class="a" style="left:1100px;top:700px" width="820" height="527" viewBox="1100 700 820 527">
<line x1="1122" y1="1091.2" x2="1841" y2="1091.2" stroke="#8e949e" stroke-width="1.6" stroke-dasharray="1.8 5"/>
<line x1="1122" y1="1046.1" x2="1841" y2="1046.1" stroke="#8e949e" stroke-width="1.6" stroke-dasharray="1.8 5"/>
<line x1="1122" y1="1001.0" x2="1841" y2="1001.0" stroke="#8e949e" stroke-width="1.6" stroke-dasharray="1.8 5"/>
<line x1="1122" y1="955.9" x2="1841" y2="955.9" stroke="#8e949e" stroke-width="1.6" stroke-dasharray="1.8 5"/>
<line x1="1122" y1="910.8" x2="1841" y2="910.8" stroke="#8e949e" stroke-width="1.6" stroke-dasharray="1.8 5"/>
<line x1="1122" y1="865.7" x2="1841" y2="865.7" stroke="#8e949e" stroke-width="1.6" stroke-dasharray="1.8 5"/>
<line x1="1122" y1="820.6" x2="1841" y2="820.6" stroke="#8e949e" stroke-width="1.6" stroke-dasharray="1.8 5"/>
<line x1="1122" y1="775.5" x2="1841" y2="775.5" stroke="#8e949e" stroke-width="1.6" stroke-dasharray="1.8 5"/>
<line x1="1843.5" y1="748.4" x2="1847" y2="748.4" stroke="#a0a6b0" stroke-width="1.3"/>
<line x1="1843.5" y1="757.5" x2="1847" y2="757.5" stroke="#a0a6b0" stroke-width="1.3"/>
<line x1="1843.5" y1="766.5" x2="1847" y2="766.5" stroke="#a0a6b0" stroke-width="1.3"/>
<line x1="1843.5" y1="775.5" x2="1851" y2="775.5" stroke="#a0a6b0" stroke-width="1.3"/>
<line x1="1843.5" y1="784.5" x2="1847" y2="784.5" stroke="#a0a6b0" stroke-width="1.3"/>
<line x1="1843.5" y1="793.5" x2="1847" y2="793.5" stroke="#a0a6b0" stroke-width="1.3"/>
<line x1="1843.5" y1="802.6" x2="1847" y2="802.6" stroke="#a0a6b0" stroke-width="1.3"/>
<line x1="1843.5" y1="811.6" x2="1847" y2="811.6" stroke="#a0a6b0" stroke-width="1.3"/>
<line x1="1843.5" y1="820.6" x2="1851" y2="820.6" stroke="#a0a6b0" stroke-width="1.3"/>
<line x1="1843.5" y1="829.6" x2="1847" y2="829.6" stroke="#a0a6b0" stroke-width="1.3"/>
<line x1="1843.5" y1="838.6" x2="1847" y2="838.6" stroke="#a0a6b0" stroke-width="1.3"/>
<line x1="1843.5" y1="847.7" x2="1847" y2="847.7" stroke="#a0a6b0" stroke-width="1.3"/>
<line x1="1843.5" y1="856.7" x2="1847" y2="856.7" stroke="#a0a6b0" stroke-width="1.3"/>
<line x1="1843.5" y1="865.7" x2="1851" y2="865.7" stroke="#a0a6b0" stroke-width="1.3"/>
<line x1="1843.5" y1="874.7" x2="1847" y2="874.7" stroke="#a0a6b0" stroke-width="1.3"/>
<line x1="1843.5" y1="883.7" x2="1847" y2="883.7" stroke="#a0a6b0" stroke-width="1.3"/>
<line x1="1843.5" y1="892.8" x2="1847" y2="892.8" stroke="#a0a6b0" stroke-width="1.3"/>
<line x1="1843.5" y1="901.8" x2="1847" y2="901.8" stroke="#a0a6b0" stroke-width="1.3"/>
<line x1="1843.5" y1="910.8" x2="1851" y2="910.8" stroke="#a0a6b0" stroke-width="1.3"/>
<line x1="1843.5" y1="919.8" x2="1847" y2="919.8" stroke="#a0a6b0" stroke-width="1.3"/>
<line x1="1843.5" y1="928.8" x2="1847" y2="928.8" stroke="#a0a6b0" stroke-width="1.3"/>
<line x1="1843.5" y1="937.9" x2="1847" y2="937.9" stroke="#a0a6b0" stroke-width="1.3"/>
<line x1="1843.5" y1="946.9" x2="1847" y2="946.9" stroke="#a0a6b0" stroke-width="1.3"/>
<line x1="1843.5" y1="955.9" x2="1851" y2="955.9" stroke="#a0a6b0" stroke-width="1.3"/>
<line x1="1843.5" y1="964.9" x2="1847" y2="964.9" stroke="#a0a6b0" stroke-width="1.3"/>
<line x1="1843.5" y1="973.9" x2="1847" y2="973.9" stroke="#a0a6b0" stroke-width="1.3"/>
<line x1="1843.5" y1="983.0" x2="1847" y2="983.0" stroke="#a0a6b0" stroke-width="1.3"/>
<line x1="1843.5" y1="992.0" x2="1847" y2="992.0" stroke="#a0a6b0" stroke-width="1.3"/>
<line x1="1843.5" y1="1001.0" x2="1851" y2="1001.0" stroke="#a0a6b0" stroke-width="1.3"/>
<line x1="1843.5" y1="1010.0" x2="1847" y2="1010.0" stroke="#a0a6b0" stroke-width="1.3"/>
<line x1="1843.5" y1="1019.0" x2="1847" y2="1019.0" stroke="#a0a6b0" stroke-width="1.3"/>
<line x1="1843.5" y1="1028.1" x2="1847" y2="1028.1" stroke="#a0a6b0" stroke-width="1.3"/>
<line x1="1843.5" y1="1037.1" x2="1847" y2="1037.1" stroke="#a0a6b0" stroke-width="1.3"/>
<line x1="1843.5" y1="1046.1" x2="1851" y2="1046.1" stroke="#a0a6b0" stroke-width="1.3"/>
<line x1="1843.5" y1="1055.1" x2="1847" y2="1055.1" stroke="#a0a6b0" stroke-width="1.3"/>
<line x1="1843.5" y1="1064.1" x2="1847" y2="1064.1" stroke="#a0a6b0" stroke-width="1.3"/>
<line x1="1843.5" y1="1073.2" x2="1847" y2="1073.2" stroke="#a0a6b0" stroke-width="1.3"/>
<line x1="1843.5" y1="1082.2" x2="1847" y2="1082.2" stroke="#a0a6b0" stroke-width="1.3"/>
<line x1="1843.5" y1="1091.2" x2="1851" y2="1091.2" stroke="#a0a6b0" stroke-width="1.3"/>
<text x="1917.5" y="1098.5" font-size="20.5" fill="#222" text-anchor="end">&#8722;8,000</text>
<text x="1917.5" y="1053.4" font-size="20.5" fill="#222" text-anchor="end">&#8722;6,000</text>
<text x="1917.5" y="1008.3" font-size="20.5" fill="#222" text-anchor="end">&#8722;4,000</text>
<text x="1917.5" y="963.2" font-size="20.5" fill="#222" text-anchor="end">&#8722;2,000</text>
<text x="1917.5" y="918.1" font-size="20.5" fill="#222" text-anchor="end">0</text>
<text x="1917.5" y="873.0" font-size="20.5" fill="#222" text-anchor="end">2,000</text>
<text x="1917.5" y="827.9" font-size="20.5" fill="#222" text-anchor="end">4,000</text>
<text x="1917.5" y="782.8" font-size="20.5" fill="#222" text-anchor="end">6,000</text>
<rect x="1122.5" y="910" width="55.5" height="185.9" fill="#2983e6"/>
<rect x="1180.9" y="874.1" width="55.5" height="37.7" fill="#e70000"/>
<rect x="1239.3" y="748.6" width="55.5" height="163.2" fill="#e70000"/>
<rect x="1297.6" y="787.3" width="55.5" height="124.5" fill="#e70000"/>
<rect x="1356.0" y="909.0" width="55.5" height="2.8" fill="#e70000"/>
<rect x="1414.4" y="904.9" width="55.5" height="6.9" fill="#e70000"/>
<rect x="1472.8" y="903.3" width="55.5" height="8.5" fill="#e70000"/>
<rect x="1531.2" y="909.0" width="55.5" height="2.8" fill="#e70000"/>
<rect x="1589.5" y="909.0" width="55.5" height="2.8" fill="#e70000"/>
<rect x="1647.9" y="878.6" width="55.5" height="33.2" fill="#e70000"/>
<rect x="1706.3" y="910" width="55.5" height="11.4" fill="#2983e6"/>
<rect x="1764.7" y="910" width="55.5" height="2.8" fill="#2983e6"/>
<line x1="1121.9" y1="1102.5" x2="1121.9" y2="1140" stroke="#a0a6b0" stroke-width="1.5"/>
<line x1="1180.1" y1="1102.5" x2="1180.1" y2="1140" stroke="#a0a6b0" stroke-width="1.5"/>
<line x1="1238.4" y1="1102.5" x2="1238.4" y2="1140" stroke="#a0a6b0" stroke-width="1.5"/>
<line x1="1296.6" y1="1102.5" x2="1296.6" y2="1140" stroke="#a0a6b0" stroke-width="1.5"/>
<line x1="1354.9" y1="1102.5" x2="1354.9" y2="1140" stroke="#a0a6b0" stroke-width="1.5"/>
<line x1="1413.1" y1="1102.5" x2="1413.1" y2="1140" stroke="#a0a6b0" stroke-width="1.5"/>
<line x1="1471.3" y1="1102.5" x2="1471.3" y2="1140" stroke="#a0a6b0" stroke-width="1.5"/>
<line x1="1529.6" y1="1102.5" x2="1529.6" y2="1140" stroke="#a0a6b0" stroke-width="1.5"/>
<line x1="1587.8" y1="1102.5" x2="1587.8" y2="1140" stroke="#a0a6b0" stroke-width="1.5"/>
<line x1="1646.1" y1="1102.5" x2="1646.1" y2="1140" stroke="#a0a6b0" stroke-width="1.5"/>
<line x1="1704.3" y1="1102.5" x2="1704.3" y2="1140" stroke="#a0a6b0" stroke-width="1.5"/>
<line x1="1762.5" y1="1102.5" x2="1762.5" y2="1140" stroke="#a0a6b0" stroke-width="1.5"/>
</svg>
<div class="a" style="left:1138.2px;top:1108.5px;width:24px;font-size:20px;line-height:20.2px;text-align:center;color:#333">개<br>인</div>
<div class="a" style="left:1196.6px;top:1108.5px;width:24px;font-size:20px;line-height:20.2px;text-align:center;color:#333">외<br>국<br>인</div>
<div class="a" style="left:1255.0px;top:1108.5px;width:24px;font-size:20px;line-height:20.2px;text-align:center;color:#333">기<br>관</div>
<div class="a" style="left:1313.4px;top:1108.5px;width:24px;font-size:20px;line-height:20.2px;text-align:center;color:#333">금<br>융<br>투<br>자</div>
<div class="a" style="left:1371.8px;top:1108.5px;width:24px;font-size:20px;line-height:20.2px;text-align:center;color:#333">보<br>험</div>
<div class="a" style="left:1430.2px;top:1108.5px;width:24px;font-size:20px;line-height:20.2px;text-align:center;color:#333">투<br>신</div>
<div class="a" style="left:1488.5px;top:1108.5px;width:24px;font-size:20px;line-height:20.2px;text-align:center;color:#333">사<br>모<br>펀<br>드</div>
<div class="a" style="left:1546.9px;top:1108.5px;width:24px;font-size:20px;line-height:20.2px;text-align:center;color:#333">은<br>행</div>
<div class="a" style="left:1605.3px;top:1108.5px;width:24px;font-size:20px;line-height:20.2px;text-align:center;color:#333">기<br>타<br>금<br>융</div>
<div class="a" style="left:1663.7px;top:1108.5px;width:24px;font-size:20px;line-height:20.2px;text-align:center;color:#333">연<br>기<br>금<br>등</div>
<div class="a" style="left:1722.1px;top:1108.5px;width:24px;font-size:20px;line-height:20.2px;text-align:center;color:#333">기<br>타<br>법<br>인</div>
<div class="a" style="left:1780.4px;top:1108.5px;width:24px;font-size:20px;line-height:20.2px;text-align:center;color:#333">기<br>타<br>외<br>국<br>인</div>
<div class="a" style="left:1148.6px;top:731.3px;width:6px;height:12px;background:#e00000"></div>
<div class="a" style="left:1161.3px;top:724px;font-size:20.5px;line-height:26px;color:#e00000;white-space:nowrap;letter-spacing:-0.9px">투자자별순매수규모</div>
</body></html>
